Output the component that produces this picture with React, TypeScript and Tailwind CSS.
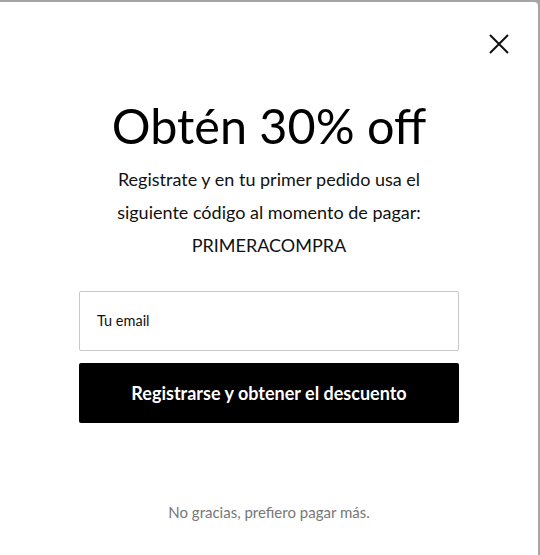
import React from "react";

export default function App() {
  return (
    <div className="w-[540px] h-[555px] bg-[#a5a5a5] pt-[2px] pr-[2px] overflow-hidden" style={{ fontFamily: "Lato, 'Noto Sans', sans-serif" }}>
      <div className="relative h-[553px] bg-white rounded-tr-[4px] flex flex-col items-center">
        <button className="absolute left-[488px] top-[31px] w-[22px] h-[22px] flex items-center justify-center">
          <svg width="22" height="22" viewBox="0 0 22 22" fill="none" stroke="#111" strokeWidth="2">
            <path d="M2 2 L20 20 M20 2 L2 20" />
          </svg>
        </button>
        <h1 className="mt-[93px] text-[48.5px] leading-[60px] text-black font-normal">Obtén 30% off</h1>
        <p className="mt-[8px] w-[340px] text-center text-[18px] leading-[33px] text-[#111]">
          Registrate y en tu primer pedido usa el siguiente código al momento de pagar:
        </p>
        <p className="text-[18px] leading-[33px] text-[#111]">PRIMERACOMPRA</p>
        <div className="mt-[29px] w-[380px] h-[60px] border border-[#c8c8c8] rounded-[2px] flex items-center px-[17px]">
          <span className="text-[14.5px] text-[#111]">Tu email</span>
        </div>
        <button className="mt-[12px] w-[380px] h-[60px] bg-black rounded-[2px] text-white text-[18px] font-bold flex items-center justify-center">
          Registrarse y obtener el descuento
        </button>
        <p className="mt-[78px] text-[15px] text-[#777]">No gracias, prefiero pagar más.</p>
      </div>
    </div>
  );
}
